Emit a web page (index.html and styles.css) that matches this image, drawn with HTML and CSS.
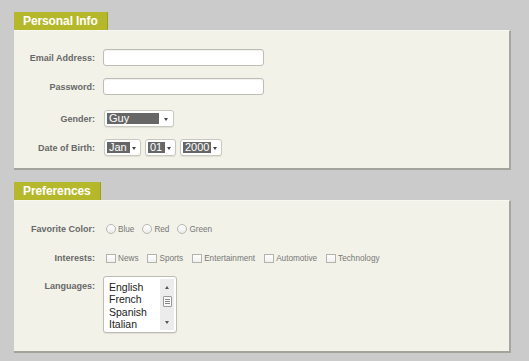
FILE: index.html
```html
<!DOCTYPE html>
<html>
<head>
<meta charset="utf-8">
<link rel="stylesheet" href="styles.css">
</head>
<body>
<div class="page">
  <section class="group">
    <div class="tab">Personal Info</div>
    <div class="panel panel-personal">
      <div class="row">
        <label class="label">Email Address:</label>
        <div class="input"></div>
      </div>
      <div class="row">
        <label class="label">Password:</label>
        <div class="input"></div>
      </div>
      <div class="row row-gender">
        <label class="label">Gender:</label>
        <div class="select"><span class="val val-gender">Guy</span><span class="arrow"></span></div>
      </div>
      <div class="row">
        <label class="label">Date of Birth:</label>
        <div class="select"><span class="val val-month">Jan</span><span class="arrow"></span></div>
        <div class="select"><span class="val val-day">01</span><span class="arrow"></span></div>
        <div class="select"><span class="val val-year">2000</span><span class="arrow"></span></div>
      </div>
    </div>
  </section>

  <section class="group group-2">
    <div class="tab">Preferences</div>
    <div class="panel panel-prefs">
      <div class="row row-color">
        <label class="label">Favorite Color:</label>
        <span class="opt"><span class="radio"></span>Blue</span>
        <span class="opt"><span class="radio"></span>Red</span>
        <span class="opt"><span class="radio"></span>Green</span>
      </div>
      <div class="row row-interests">
        <label class="label">Interests:</label>
        <span class="opt"><span class="check"></span>News</span>
        <span class="opt"><span class="check"></span>Sports</span>
        <span class="opt"><span class="check"></span>Entertainment</span>
        <span class="opt"><span class="check"></span>Automotive</span>
        <span class="opt"><span class="check"></span>Technology</span>
      </div>
      <div class="row row-lang">
        <label class="label label-lang">Languages:</label>
        <div class="listbox">
          <ul class="items">
            <li>English</li>
            <li>French</li>
            <li>Spanish</li>
            <li>Italian</li>
          </ul>
          <div class="scrollbar">
            <span class="sb-up"></span>
            <span class="sb-thumb"><i></i><i></i><i></i></span>
            <span class="sb-down"></span>
          </div>
        </div>
      </div>
    </div>
  </section>
</div>
</body>
</html>
```

FILE: styles.css
```css
* { box-sizing: border-box; }
html, body { margin: 0; padding: 0; }
body {
  background: #cbcbcb;
  font-family: "Liberation Sans", Arial, sans-serif;
  width: 529px;
  height: 361px;
  overflow: hidden;
}
.page {
  padding: 12px 0 0 14px;
  width: 511px;
}
.group-2 { margin-top: 12px; }
.tab {
  display: inline-block;
  height: 18px;
  line-height: 18px;
  padding: 0 9px 0 9px;
  background: #b5b82a;
  border-right: 1px solid #9c9f22;
  color: #fff;
  font-weight: bold;
  font-size: 12px;
  letter-spacing: -0.1px;
  vertical-align: top;
}
.panel {
  background: #f2f2e8;
  border-top: 1px solid #f8f8f2;
  border-right: 2px solid #a6a69e;
  border-bottom: 2px solid #a3a39b;
  display: flex;
  flex-direction: column;
}
.panel-personal { padding: 18px 0 0; height: 140px; }
.panel-prefs { padding: 21px 0 0; height: 153px; }
.row {
  display: flex;
  align-items: center;
  height: 17px;
}
.row + .row { margin-top: 12px; }
.panel-personal .row-gender { margin-top: 15px; }
.label {
  width: 81px;
  margin-right: 8px;
  text-align: right;
  font-size: 9px;
  font-weight: bold;
  color: #686868;
  flex: none;
}
.input {
  width: 161px;
  height: 17px;
  background: #fff;
  border: 1px solid #bdbdb6;
  border-radius: 3px;
  box-shadow: inset 0 1px 1px rgba(0,0,0,0.06);
}
.select {
  display: flex;
  align-items: center;
  height: 17px;
  margin-left: 1px;
  margin-right: 4px;
  padding: 0 2px;
  background: #fff;
  border: 1px solid #c9c9c2;
  border-radius: 3px;
  box-shadow: 0 1px 1px rgba(0,0,0,0.08);
}
.select + .select { margin-left: 0; }
.val {
  display: block;
  height: 11px;
  line-height: 11px;
  background: #666;
  color: #fff;
  font-size: 11px;
  padding-left: 2px;
}
.val-gender { width: 52px; }
.val-month { width: 23px; }
.val-day { width: 17px; }
.val-year { width: 28px; }
.arrow {
  width: 0;
  height: 0;
  margin: 1px 2px 0 2px;
  border-left: 2px solid transparent;
  border-right: 2px solid transparent;
  border-top: 3px solid #444;
}
.val-gender + .arrow { margin: 1px 3px 0 5px; }
.row-color, .row-interests { height: 14px; }
.panel-prefs .row-interests { margin-top: 15px; }
.panel-prefs .row-lang { margin-top: 11px; height: auto; align-items: flex-start; }
.label-lang { padding-top: 5px; }
.opt {
  display: inline-flex;
  align-items: center;
  font-size: 8.2px;
  color: #777;
  margin-right: 6px;
}
.radio {
  width: 10px;
  height: 10px;
  border: 1px solid #b8b8b0;
  border-radius: 50%;
  background: linear-gradient(#fff, #ececec);
  margin: 0 2px 0 3px;
}
.check {
  width: 10px;
  height: 9px;
  border: 1px solid #b3b3ab;
  background: linear-gradient(#fff, #f0f0f0);
  margin: 0 2px 0 3px;
}
.row-color .opt { margin-right: 5px; }
.listbox {
  display: flex;
  width: 74px;
  height: 57px;
  background: #fff;
  border: 1px solid #bdbdb6;
  border-radius: 3px;
  box-shadow: 0 1px 1px rgba(0,0,0,0.08);
  padding: 2px 2px 2px 4px;
}
.items {
  list-style: none;
  margin: 0;
  padding: 2px 0 0 1px;
  flex: 1;
  font-size: 10.5px;
  line-height: 12.3px;
  color: #222;
}
.scrollbar {
  width: 14px;
  background: #ececec;
  display: flex;
  flex-direction: column;
  align-items: center;
}
.sb-up {
  margin-top: 7px;
  width: 0; height: 0;
  border-left: 2px solid transparent;
  border-right: 2px solid transparent;
  border-bottom: 3px solid #555;
}
.sb-thumb {
  margin-top: 7px;
  width: 9px;
  height: 11px;
  background: #fafafa;
  border: 1px solid #999;
  border-radius: 1px;
  display: flex;
  flex-direction: column;
  justify-content: center;
  align-items: center;
  gap: 1px;
}
.sb-thumb i {
  display: block;
  width: 5px;
  height: 1px;
  background: #888;
}
.sb-down {
  margin-top: auto;
  margin-bottom: 6px;
  width: 0; height: 0;
  border-left: 2px solid transparent;
  border-right: 2px solid transparent;
  border-top: 3px solid #555;
}
```
